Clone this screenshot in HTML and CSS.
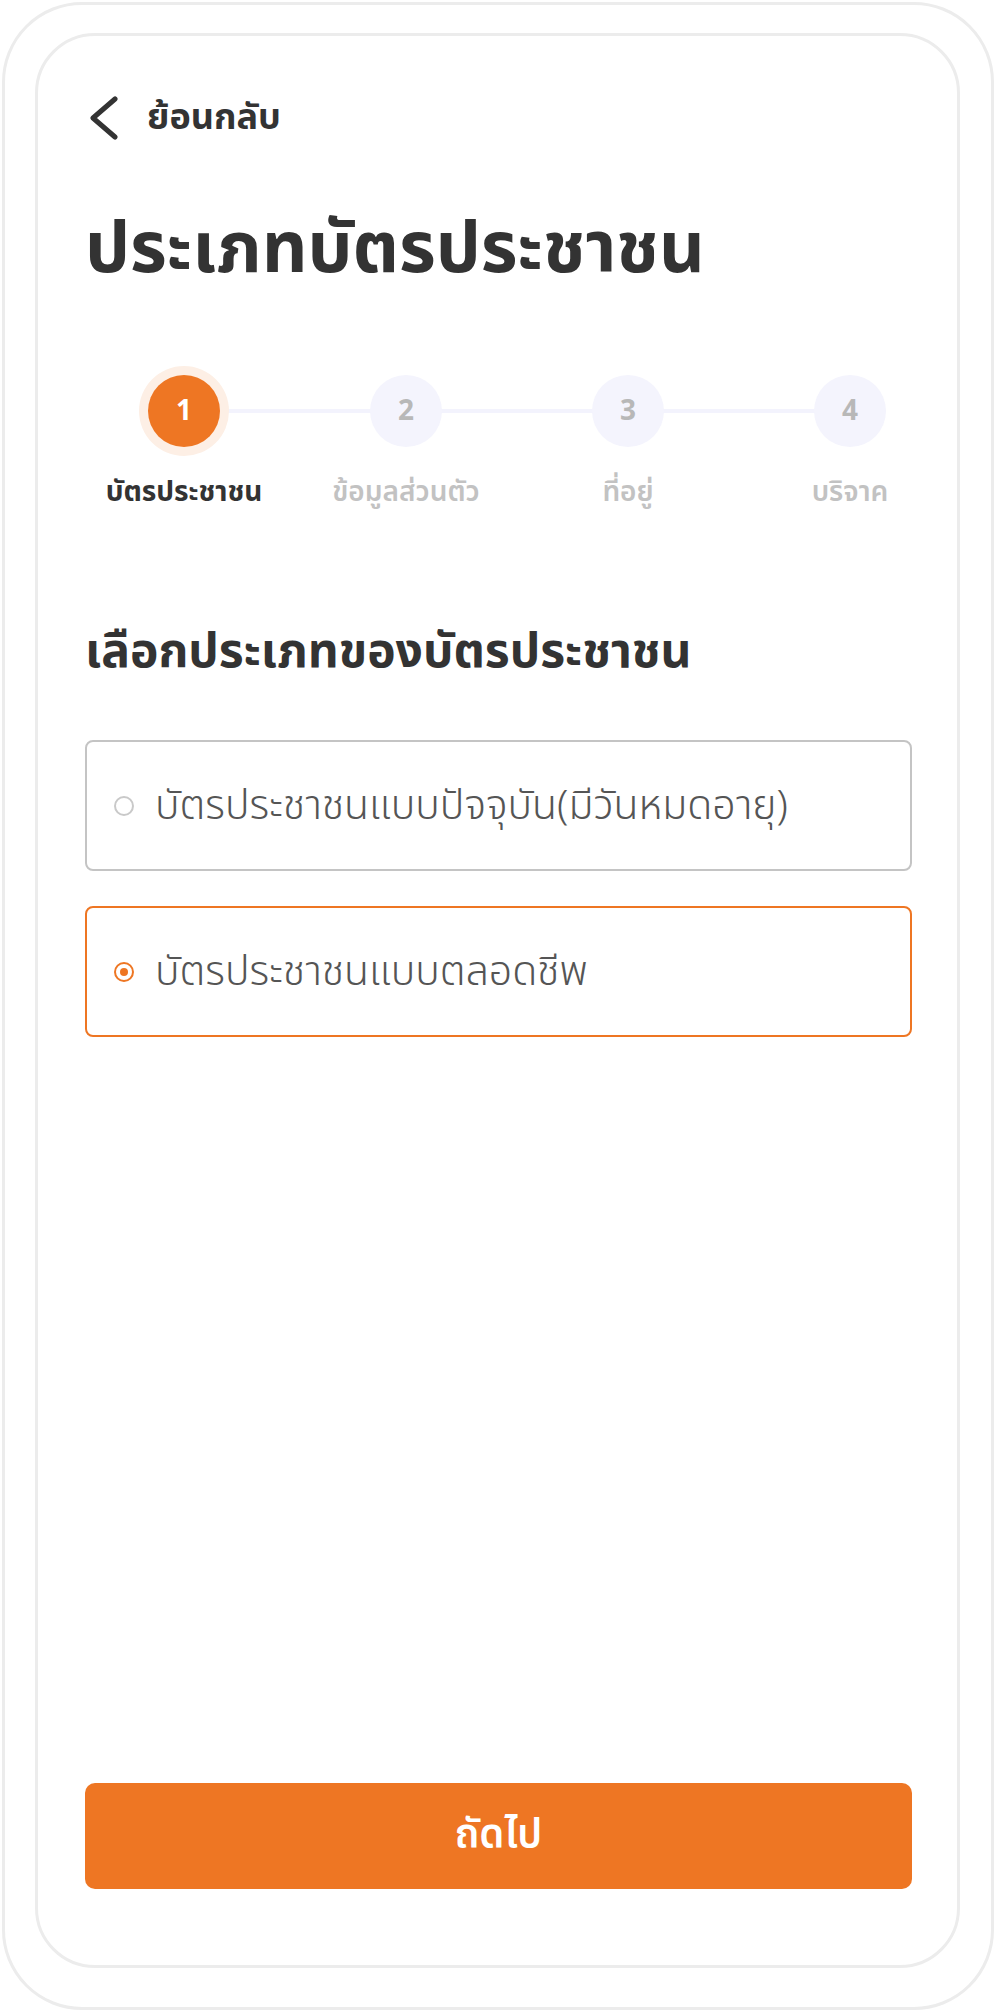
FILE: index.html
```html
<!DOCTYPE html>
<html lang="th">
<head>
<meta charset="utf-8">
<title>ประเภทบัตรประชาชน</title>
<link rel="stylesheet" href="styles.css">
</head>
<body>
<div class="device">
  <div class="screen">
    <a class="back" href="#">
      <svg class="back-icon" width="34" height="44" viewBox="0 0 34 44"><path d="M30 3 L8 22 L30 41" fill="none" stroke="#333" stroke-width="5" stroke-linecap="round" stroke-linejoin="round"/></svg>
      <span class="back-text">ย้อนกลับ</span>
    </a>
    <h1 class="title">ประเภทบัตรประชาชน</h1>

    <div class="stepper">
      <div class="step active">
        <div class="dot">1</div>
        <div class="label">บัตรประชาชน</div>
      </div>
      <div class="step">
        <div class="dot">2</div>
        <div class="label">ข้อมูลส่วนตัว</div>
      </div>
      <div class="step">
        <div class="dot">3</div>
        <div class="label">ที่อยู่</div>
      </div>
      <div class="step last">
        <div class="dot">4</div>
        <div class="label">บริจาค</div>
      </div>
    </div>

    <h2 class="section">เลือกประเภทของบัตรประชาชน</h2>

    <div class="options">
      <label class="option">
        <span class="radio"></span>
        <span class="option-text">บัตรประชาชนแบบปัจจุบัน(มีวันหมดอายุ)</span>
      </label>
      <label class="option selected">
        <span class="radio"></span>
        <span class="option-text">บัตรประชาชนแบบตลอดชีพ</span>
      </label>
    </div>

    <button class="next" type="button">ถัดไป</button>
  </div>
</div>
</body>
</html>
```

FILE: styles.css
```css
* { box-sizing: border-box; }
html, body { margin: 0; padding: 0; background: #fff; }
body {
  font-family: "Noto Sans Thai", "Noto Sans Thai UI", "Noto Sans", "Liberation Sans", sans-serif;
  color: #333;
}
.device {
  margin: 2px;
  height: 2008px;
  border: 3px solid #ececec;
  border-radius: 80px;
  padding: 28px 31px 39px 30px;
}
.screen {
  height: 100%;
  border: 3px solid #ececec;
  border-radius: 60px;
  padding: 60px 45px 76px 47px;
  display: flex;
  flex-direction: column;
}
.back {
  display: flex;
  align-items: center;
  gap: 28px;
  color: #333;
  text-decoration: none;
  height: 44px;
}
.back-text {
  font-size: 36px;
  font-weight: 700;
  line-height: 44px;
}
.title {
  margin: 68px 0 0;
  font-size: 71px;
  font-weight: 700;
  line-height: 85px;
  color: #333;
  white-space: nowrap;
}
.stepper {
  display: grid;
  grid-template-columns: repeat(4, 222px);
  margin: 82px 0 0 -12px;
}
.step {
  position: relative;
  display: flex;
  flex-direction: column;
  align-items: center;
}
.step::after {
  content: "";
  position: absolute;
  top: 34px;
  left: 50%;
  width: 100%;
  height: 4px;
  background: #f3f3fd;
  z-index: 0;
}
.step.last::after { display: none; }
.dot {
  position: relative;
  z-index: 1;
  width: 72px;
  height: 72px;
  border-radius: 50%;
  background: #f4f4fd;
  color: #b8b8b8;
  font-size: 28px;
  font-weight: 700;
  display: flex;
  align-items: center;
  justify-content: center;
}
.step.active .dot {
  background: #ee7623;
  color: #fff;
  box-shadow: 0 0 0 9px #fdefe5;
}
.label {
  margin-top: 26px;
  font-size: 28px;
  line-height: 39px;
  font-weight: 600;
  color: #c2c2c2;
  white-space: nowrap;
}
.step.active .label { color: #333; font-weight: 700; }
.section {
  margin: 111px 0 0;
  font-size: 48px;
  line-height: 60px;
  font-weight: 700;
  color: #333;
  white-space: nowrap;
}
.options {
  display: flex;
  flex-direction: column;
  gap: 35px;
  margin-top: 57px;
}
.option {
  height: 131px;
  border: 2px solid #c4c4c4;
  border-radius: 8px;
  display: flex;
  align-items: center;
  padding-left: 27px;
  gap: 21px;
}
.option.selected { border-color: #ee7623; }
.radio {
  flex: none;
  width: 20px;
  height: 20px;
  border: 2px solid #c9c9c9;
  border-radius: 50%;
  display: flex;
  align-items: center;
  justify-content: center;
}
.option.selected .radio { border-color: #ee7623; }
.option.selected .radio::after {
  content: "";
  width: 8px;
  height: 8px;
  border-radius: 50%;
  background: #ee7623;
}
.option-text {
  font-size: 41px;
  font-weight: 300;
  color: #555;
  white-space: nowrap;
}
.next {
  margin-top: auto;
  height: 106px;
  border: none;
  border-radius: 10px;
  background: #ee7623;
  color: #fff;
  font-family: inherit;
  font-size: 40px;
  font-weight: 600;
}
```
